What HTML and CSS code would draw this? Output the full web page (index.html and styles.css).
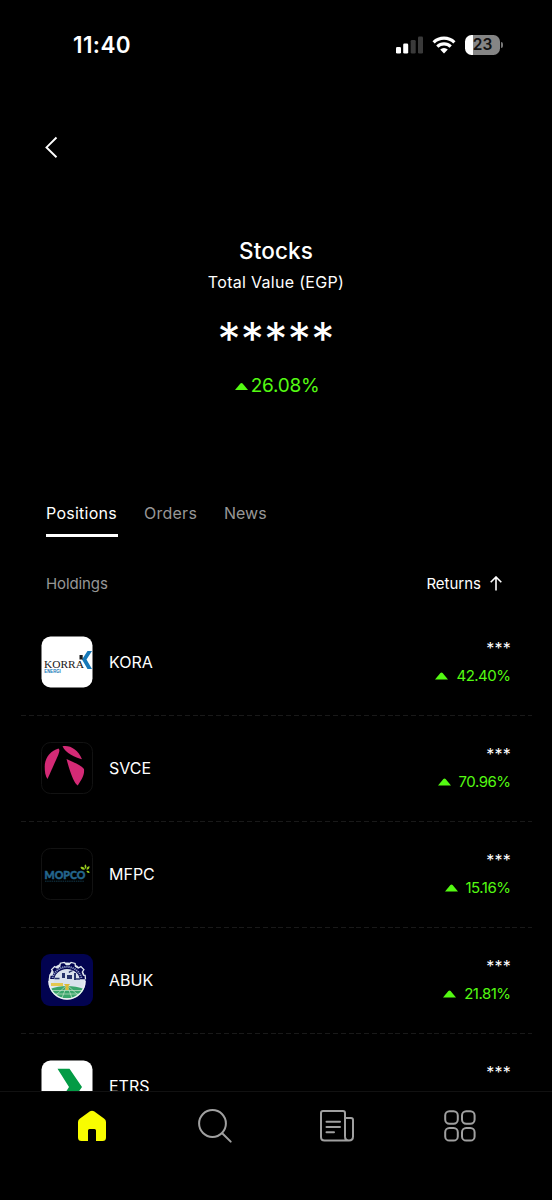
FILE: index.html
```html
<!DOCTYPE html>
<html lang="en">
<head>
<meta charset="utf-8">
<title>Stocks</title>
<link rel="stylesheet" href="styles.css">
</head>
<body>
<div class="screen">
  <header class="status">
    <span class="clock">11:40</span>
    <div class="status-icons">
      <svg class="signal" width="28" height="18" viewBox="0 0 28 18"><rect x="0" y="11" width="5" height="6.500" rx="1.300" fill="#fff"/><rect x="7.200" y="7.500" width="5" height="10" rx="1.300" fill="#fff"/><rect x="14.700" y="4" width="5" height="13.500" rx="1.300" fill="#3a3a3a"/><rect x="22" y="0.500" width="5" height="17" rx="1.300" fill="#3a3a3a"/></svg>
      <svg class="wifi" width="24" height="18" viewBox="0 0 24 18"><g fill="none" stroke="#fff" stroke-width="3.200"><path d="M1.600 6.400a15 15 0 0 1 20.800 0"/><path d="M5.300 10.600a9.700 9.700 0 0 1 13.400 0"/></g><path d="M12 17.500l-3.800-3.900a5.500 5.500 0 0 1 7.600 0z" fill="#fff"/></svg>
      <div class="battery"><span class="battery-level">23</span><i class="battery-tip"></i></div>
    </div>
  </header>
  <nav class="back-row"><svg width="16" height="24" viewBox="0 0 16 24"><path d="M12.500 2.500L2.500 12.400l10 9.800" fill="none" stroke="#fff" stroke-width="1.900"/></svg></nav>
  <section class="hero">
    <h1 class="title">Stocks</h1>
    <div class="subtitle">Total Value (EGP)</div>
    <div class="amount">*****</div>
    <div class="gain"><svg width="13" height="8" viewBox="0 0 13 8"><path d="M0 8L5.400 1.400Q6.500.5 7.600 1.400L13 8z" fill="#54fa12"/></svg><span>26.08%</span></div>
  </section>
  <div class="tabs"><span class="tab tab-positions">Positions</span><span class="tab tab-orders">Orders</span><span class="tab tab-news">News</span></div>
  <div class="list-head"><span class="holdings">Holdings</span><span class="returns">Returns</span><svg width="12" height="15" viewBox="0 0 12 15"><path d="M6 14.500V1.200M.7 6.300L6 1l5.300 5.300" fill="none" stroke="#fff" stroke-width="1.600"/></svg></div>
  <main class="list">
    <div class="row">
      <svg class="logo" viewBox="0 0 52 52"><rect x=".5" y=".5" width="51" height="51" rx="9" fill="#fff"/><path d="M46.500 15h4.500l-5.500 8.500 5.500 9.500h-4.500l-5.500-9.500z" fill="#1678b8"/><rect x="38.500" y="19" width="3.200" height="4.500" fill="#1a1a1a"/><text x="3" y="32.300" class="korra" textLength="40" lengthAdjust="spacingAndGlyphs">KORRA</text><text x="3.300" y="36.800" class="energi" textLength="16.500" lengthAdjust="spacingAndGlyphs">ENERGI</text></svg>
      <span class="name">KORA</span>
      <div class="figures"><span class="stars">***</span><span class="pct"><svg width="13" height="8" viewBox="0 0 13 8"><path d="M0 7.500L5.400.9Q6.500 0 7.600.9L13 7.500z" fill="#54fa12"/></svg>42.40%</span></div>
    </div>
    <div class="row">
      <svg class="logo" viewBox="0 0 52 52"><rect x=".5" y=".5" width="51" height="51" rx="9" fill="#000" stroke="#121212"/><g fill="#d42a76"><path d="M17.500 6.500c-8 2-13.800 9.500-13.800 18 0 5.500.8 10 2.800 12.500L17 13.500c1.300-3.500 2-5.800.5-7z"/><path d="M21.500 4.200c7.500-1.400 15.500 3.300 19.500 13-6.500-1.500-16.500-6-19.500-13z"/><path d="M25.500 17c7 3.500 14.500 6 17.500 10 .6 6.500-2.300 10-6.300 16.500C33.800 41.500 30 34 25.500 17z"/></g></svg>
      <span class="name">SVCE</span>
      <div class="figures"><span class="stars">***</span><span class="pct"><svg width="13" height="8" viewBox="0 0 13 8"><path d="M0 7.500L5.400.9Q6.500 0 7.600.9L13 7.500z" fill="#54fa12"/></svg>70.96%</span></div>
    </div>
    <div class="row">
      <svg class="logo" viewBox="0 0 52 52"><rect x=".5" y=".5" width="51" height="51" rx="9" fill="#000" stroke="#121212"/><text x="3.500" y="30.500" class="mopco" textLength="41" lengthAdjust="spacingAndGlyphs">MOPCO</text><path d="M4 33.200h39.500" stroke="#17455c" stroke-width=".8" stroke-dasharray="1.500 .7"/><g fill="#9bd11e"><path d="M39.500 19c2-.6 4 .3 4.500 2.500-2.300.5-4-.3-4.500-2.500z"/><path d="M44.200 16.300c1.400 1.200 1.600 2.900.6 4.600-1.400-1-1.600-3-.6-4.600z"/><path d="M48.500 18.300c.1 2.400-1 3.400-3 3.500 0-2 1-3.300 3-3.500z"/><path d="M45.500 23c1.500-.7 2.900.1 3.200 1.800-1.700.3-3-.2-3.200-1.800z"/></g></svg>
      <span class="name">MFPC</span>
      <div class="figures"><span class="stars">***</span><span class="pct"><svg width="13" height="8" viewBox="0 0 13 8"><path d="M0 7.500L5.400.9Q6.500 0 7.600.9L13 7.500z" fill="#54fa12"/></svg>15.16%</span></div>
    </div>
    <div class="row">
      <svg class="logo" viewBox="0 0 52 52"><rect x="0" y="0" width="52" height="52" rx="9" fill="#020350"/><circle cx="26" cy="27" r="18.500" fill="#dfe7ed"/><path d="M8.500 25l.6-4h2l1-3-1.500-2.500 3-3 2.500 1.500 2.700-1.600.5-3.200 4-.8 2 2.300h2.800l2-2.300 4 1 .3 3 2.800 1.700 2.700-1.500 3 3-1.600 2.500 1.200 3 1.600.2.400 4" fill="#020350" stroke="#dfe7ed" stroke-width="1.300"/><path d="M11.500 24a15 15 0 0 1 29 0" fill="none" stroke="#8b98c2" stroke-width="2" stroke-dasharray="1.300 .8"/><path d="M13 27a13 12 0 0 1 26 0l1 5H12z" fill="#d9e2ec"/><path d="M21 19h3v5h-3zM26 21h5v4h-5zM33 19h2v7h-2z" fill="#27356b"/><path d="M28 18.500c1.500-2 3-1 3.500-2M13.500 24.500h5M35 25h4" stroke="#27356b" stroke-width="1.400" fill="none"/><path d="M10 29h12v3H10z" fill="#e4c850"/><path d="M9 35c10-4 24-4 34 0-3 6.500-9 9.500-17 9.500S12 41 9 35z" fill="#39a56b"/><path d="M26 31l-5 13M26 31l5 13M26 31L15 41M26 31l11 10M11 36.500h30M14 40h24" stroke="#c7e2c9" stroke-width=".7"/><path d="M23 30h6l-1.500 2v4h-3v-4z" fill="#dcba37"/><path d="M8 27a18 18 0 0 0 36 0" fill="none" stroke="#eef2f5" stroke-width="1.400"/></svg>
      <span class="name">ABUK</span>
      <div class="figures"><span class="stars">***</span><span class="pct"><svg width="13" height="8" viewBox="0 0 13 8"><path d="M0 7.500L5.400.9Q6.500 0 7.600.9L13 7.500z" fill="#54fa12"/></svg>21.81%</span></div>
    </div>
    <div class="row">
      <svg class="logo" viewBox="0 0 52 52"><rect x=".5" y=".5" width="51" height="51" rx="9" fill="#fff"/><path d="M16.500 8.800h12L41 27 28.500 45h-12L28 27z" fill="#039b45"/></svg>
      <span class="name">ETRS</span>
      <div class="figures"><span class="stars">***</span><span class="pct"></span></div>
    </div>
  </main>
  <footer class="bottom-nav">
    <svg width="30" height="32" viewBox="0 0 30 32"><path d="M13 1.300Q15 0 17 1.300L27 8.600Q29 10 29 12v15.500Q29 31 25.500 31H19V20.500Q19 19 17.500 19h-5Q11 19 11 20.500V31H4.500Q1 31 1 27.500V12q0-2 2-3.400z" fill="#f8fc00"/></svg>
    <svg class="nav-search" width="36" height="36" viewBox="0 0 36 36"><g fill="none" stroke="#a0a0a0" stroke-width="2" stroke-linecap="round"><circle cx="15.500" cy="15.500" r="13.400"/><path d="M25.200 25.200l8.500 8.400"/></g></svg>
    <svg class="nav-news" width="36" height="34" viewBox="0 0 36 34"><g fill="none" stroke="#a0a0a0" stroke-width="2" stroke-linecap="round" stroke-linejoin="round"><path d="M26 27V4q0-2-2-2H4Q2 2 2 4v24q0 3.500 3.500 3.500H30q4 0 4-4V11q0-2-2-2h-6M26 27.500q0 4 4 4"/><path d="M7.500 12.700h13.500M7.500 18h13.500M7.500 23.300h7.500"/></g></svg>
    <svg class="nav-grid" width="32" height="32" viewBox="0 0 32 32"><g fill="none" stroke="#a0a0a0" stroke-width="2"><rect x="1.200" y="1.200" width="12.600" height="12.600" rx="4.200"/><rect x="18" y="1.200" width="12.600" height="12.600" rx="4.200"/><rect x="1.200" y="18" width="12.600" height="12.600" rx="4.200"/><rect x="18" y="18" width="12.600" height="12.600" rx="4.200"/></g></svg>
  </footer>
</div>
</body>
</html>
```
FILE: styles.css
```css
* { box-sizing: border-box; }
body { margin: 0; background: #000; color: #fff; font-family: Inter, "Open Sans", sans-serif; }
svg { display: block; flex: none; }
.screen { width: 552px; height: 1200px; background: #000; display: flex; flex-direction: column; overflow: hidden; }
.status { height: 90px; display: flex; justify-content: space-between; padding: 0 49px 0 73px; }
.clock { font-size: 22.500px; font-weight: 600; line-height: 90px; letter-spacing: .4px; }
.status-icons { display: flex; align-items: center; height: 90px; }
.wifi { margin: 0 9px 0 8px; }
.battery { position: relative; width: 35px; height: 20px; border-radius: 6.500px; background: linear-gradient(90deg, #fff 8px, #858585 8px); margin-right: 3px; }
.battery-level { display: block; color: #111; font-size: 15.500px; font-weight: 600; line-height: 20px; text-align: center; }
.battery-tip { position: absolute; right: -3px; top: 7px; width: 2px; height: 6px; border-radius: 0 2px 2px 0; background: #777; }
.back-row { height: 114px; padding: 45px 0 0 44px; }
.hero { height: 286px; padding-top: 32px; display: flex; flex-direction: column; align-items: center; }
.title { margin: 0; font-size: 22.500px; font-weight: 500; line-height: 30px; letter-spacing: .1px; }
.subtitle { font-size: 16px; line-height: 24px; margin-top: 4px; letter-spacing: .3px; }
.amount { font-size: 46px; font-weight: 400; line-height: 48px; height: 48px; margin-top: 21px; letter-spacing: .4px; }
.gain { display: flex; align-items: center; gap: 3px; color: #54fa12; font-size: 19px; line-height: 28px; margin-top: 9px; letter-spacing: -.25px; padding-left: 2px; }
.tabs { display: flex; padding-left: 46px; height: 49px; color: #979797; font-size: 16px; line-height: 24px; margin-top: 11px; }
.tab { height: 36px; }
.tab-positions { color: #fff; width: 72px; border-bottom: 3px solid #fff; margin-right: 26px; letter-spacing: .25px; }
.tab-orders { width: 80px; letter-spacing: .25px; }
.list-head { display: flex; align-items: center; height: 30px; margin-top: 19px; padding: 0 50px 0 46px; font-size: 15px; }
.holdings { color: #979797; flex: 1; letter-spacing: -.1px; }
.returns { margin-right: 9px; }
.list { height: 482px; margin-top: 11px; overflow: hidden; }
.row { height: 106px; margin: 0 20px 0 21px; padding: 0 21px 2px 20px; display: flex; align-items: center; background: repeating-linear-gradient(90deg, #191919 0 5px, #000 5px 7.800px) bottom / 100% 1px no-repeat; }
.logo { width: 52px; height: 52px; }
.name { font-size: 16px; margin-left: 16px; flex: 1; }
.figures { display: flex; flex-direction: column; align-items: flex-end; height: 52px; }
.stars { font-size: 16px; line-height: 24px; height: 28px; letter-spacing: .2px; }
.pct { display: flex; align-items: center; gap: 8px; color: #54fa12; font-size: 15px; line-height: 24px; letter-spacing: -.5px; margin-right: .5px; }
.bottom-nav { height: 109px; flex: none; border-top: 1px solid #111; display: flex; align-items: flex-start; padding: 18px 76px 0 77px; justify-content: space-between; }
.nav-search { margin: -2px -2px 0 2px; }
.nav-news { margin: -1px 1px 0 -1px; }
.korra { font: 10.500px "Liberation Serif", serif; fill: #171717; }
.energi { font: bold 4.500px "Liberation Sans", sans-serif; fill: #1678b8; }
.mopco { font: 900 12px Lato, "Open Sans", sans-serif; fill: #24668d; stroke: #24668d; stroke-width: .5px; }
```
